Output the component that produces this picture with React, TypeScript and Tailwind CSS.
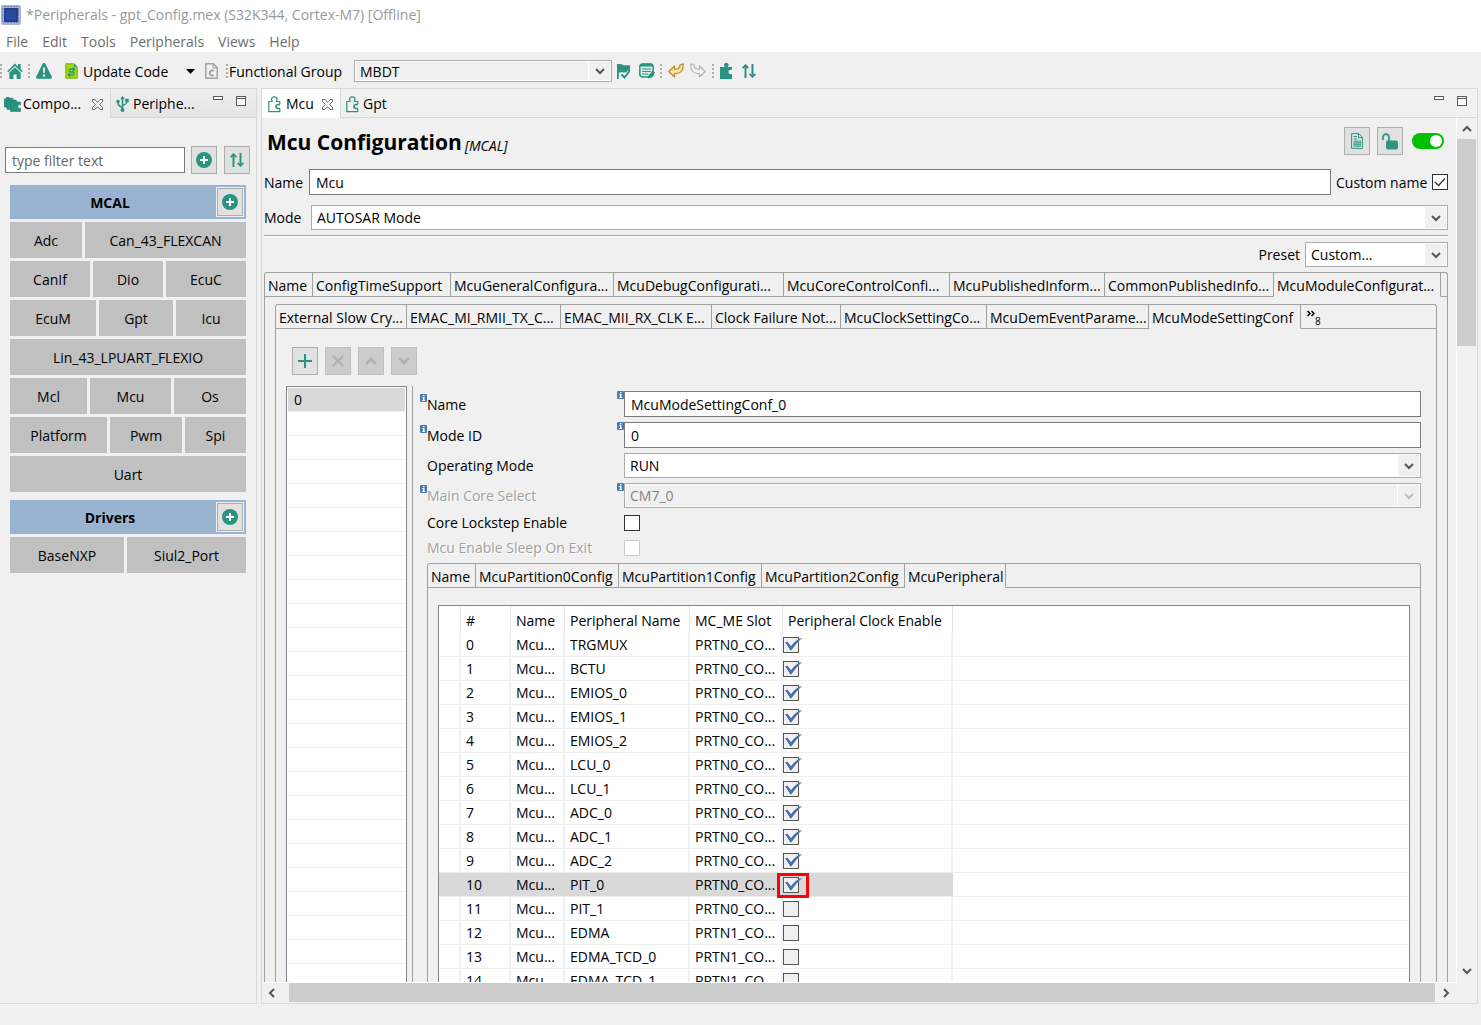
import { useState, type ReactNode } from "react";
import clsx from "clsx";

const TEAL = "#2a9480";

interface Tab {
  label: string;
  width: string;
}

interface Peripheral {
  name: string;
  slot: string;
  enabled: boolean;
}

const mainTabs: Tab[] = [
  { label: "Name", width: "w-12" },
  { label: "ConfigTimeSupport", width: "w-[138px]" },
  { label: "McuGeneralConfigura...", width: "w-[163px]" },
  { label: "McuDebugConfigurati...", width: "w-[170px]" },
  { label: "McuCoreControlConfi...", width: "w-[166px]" },
  { label: "McuPublishedInform...", width: "w-[155px]" },
  { label: "CommonPublishedInfo...", width: "w-[169px]" },
  { label: "McuModuleConfigurat...", width: "w-[167px]" },
];

const moduleTabs: Tab[] = [
  { label: "External Slow Cry...", width: "w-[131px]" },
  { label: "EMAC_MI_RMII_TX_C...", width: "w-[154px]" },
  { label: "EMAC_MII_RX_CLK E...", width: "w-[151px]" },
  { label: "Clock Failure Not...", width: "w-[129px]" },
  { label: "McuClockSettingCo...", width: "w-[146px]" },
  { label: "McuDemEventParame...", width: "w-[162px]" },
  { label: "McuModeSettingConf", width: "w-[152px]" },
];

const modeTabs: Tab[] = [
  { label: "Name", width: "w-12" },
  { label: "McuPartition0Config", width: "w-[143px]" },
  { label: "McuPartition1Config", width: "w-[143px]" },
  { label: "McuPartition2Config", width: "w-[143px]" },
  { label: "McuPeripheral", width: "w-[101px]" },
];

const peripherals: Peripheral[] = [
  { name: "TRGMUX", slot: "PRTN0_CO...", enabled: true },
  { name: "BCTU", slot: "PRTN0_CO...", enabled: true },
  { name: "EMIOS_0", slot: "PRTN0_CO...", enabled: true },
  { name: "EMIOS_1", slot: "PRTN0_CO...", enabled: true },
  { name: "EMIOS_2", slot: "PRTN0_CO...", enabled: true },
  { name: "LCU_0", slot: "PRTN0_CO...", enabled: true },
  { name: "LCU_1", slot: "PRTN0_CO...", enabled: true },
  { name: "ADC_0", slot: "PRTN0_CO...", enabled: true },
  { name: "ADC_1", slot: "PRTN0_CO...", enabled: true },
  { name: "ADC_2", slot: "PRTN0_CO...", enabled: true },
  { name: "PIT_0", slot: "PRTN0_CO...", enabled: true },
  { name: "PIT_1", slot: "PRTN0_CO...", enabled: false },
  { name: "EDMA", slot: "PRTN1_CO...", enabled: false },
  { name: "EDMA_TCD_0", slot: "PRTN1_CO...", enabled: false },
  { name: "EDMA_TCD_1", slot: "PRTN1_CO...", enabled: false },
];

const mcalRows = [
  [
    { label: "Adc", width: "w-[72px]" },
    { label: "Can_43_FLEXCAN", width: "flex-1" },
  ],
  [
    { label: "CanIf", width: "w-20" },
    { label: "Dio", width: "flex-1" },
    { label: "EcuC", width: "w-20" },
  ],
  [
    { label: "EcuM", width: "w-[86px]" },
    { label: "Gpt", width: "flex-1" },
    { label: "Icu", width: "w-[70px]" },
  ],
  [{ label: "Lin_43_LPUART_FLEXIO", width: "flex-1" }],
  [
    { label: "Mcl", width: "w-[77px]" },
    { label: "Mcu", width: "flex-1" },
    { label: "Os", width: "w-[72px]" },
  ],
  [
    { label: "Platform", width: "w-[97px]" },
    { label: "Pwm", width: "flex-1" },
    { label: "Spi", width: "w-[61px]" },
  ],
  [{ label: "Uart", width: "flex-1" }],
];

const driverRows = [
  [
    { label: "BaseNXP", width: "w-[114px]" },
    { label: "Siul2_Port", width: "flex-1" },
  ],
];

function ChipLogo() {
  return (
    <svg width="20" height="20" viewBox="0 0 20 20">
      <rect width="20" height="20" rx="2" fill="#a9b1d6" />
      <path
        d="M4 1v18M7 1v18M10 1v18M13 1v18M16 1v18M1 4h18M1 7h18M1 10h18M1 13h18M1 16h18"
        stroke="#3b4f96"
        strokeWidth="1"
        strokeDasharray="1 1"
      />
      <rect x="3" y="3" width="14" height="14" rx="1" fill="#1f3f8a" />
      <rect x="5" y="5" width="10" height="10" fill="#264b9c" />
    </svg>
  );
}

function HomeIcon() {
  return (
    <svg width="16" height="16" viewBox="0 0 16 16" fill={TEAL}>
      <path d="M8 .5 11 3.4V1h2.6v5l2.2 2.2-1.1 1.1L8 3 1.3 9.3.2 8.2z" />
      <path d="M8 4.300 13.600 9.600V16H9.600v-4.500H6.400V16H2.400V9.600z" />
    </svg>
  );
}

function WarningIcon() {
  return (
    <svg width="16" height="16" viewBox="0 0 16 16">
      <path d="M8 0c.8 0 1.2.5 1.5 1L15.700 13.500c.5 1-.2 2.200-1.200 2.200h-13C.5 15.700-.2 14.500.3 13.500L6.500 1C6.800.5 7.200 0 8 0z" fill={TEAL} />
      <path d="M7 4.500h2l-.3 5.500H7.300z" fill="#f0f0f0" />
      <circle cx="8" cy="12.500" r="1.200" fill="#f0f0f0" />
    </svg>
  );
}

function UpdateIcon() {
  return (
    <svg width="13" height="16" viewBox="0 0 13 16">
      <path d="M.8.800h8.200l3.200 3.200v11.200H.8z" fill="#a5dc00" stroke="#7ba51c" />
      <path d="M9 .5V4h3.500z" fill="#2a9480" />
      <path d="M9.200 7.500V6.200H5.400a1.400 1.400 0 0 0 0 2.800h2.200a1.400 1.400 0 0 1 0 2.900H3.500v-1.400M7.500 4.500l2 1.700-2 1.700M5.300 10.200l-2 1.700 2 1.700" fill="none" stroke={TEAL} strokeWidth="1.300" />
    </svg>
  );
}

function CFileIcon() {
  return (
    <svg width="13" height="16" viewBox="0 0 13 16" fill="none" stroke="#a3a3a3">
      <path d="M.8.800h7.400l4 4v10.400H.8z" strokeWidth="1.500" />
      <path d="M8 1v4h4" />
      <path d="M9 8.200a2.500 2.500 0 1 0 0 3.600" strokeWidth="1.800" />
    </svg>
  );
}

function FlagIcon() {
  return (
    <svg width="14" height="16" viewBox="0 0 14 16">
      <path d="M0 1h3c2 0 2.500 1.200 4.500 1.200H13v7.300H0z" fill={TEAL} />
      <path d="M0 1h1.800v15H0z" fill={TEAL} />
      <path d="m3.500 10.500 4 4 5-6" fill="none" stroke="#f0f0f0" strokeWidth="4" />
      <path d="m4.500 11.500 3 3L12.500 8" fill="none" stroke={TEAL} strokeWidth="2" />
    </svg>
  );
}

function NotesIcon() {
  return (
    <svg width="16" height="16" viewBox="0 0 16 16">
      <rect x=".8" y="1" width="13.400" height="13" rx="3" fill="#d8ece8" stroke={TEAL} strokeWidth="1.500" />
      <path d="M1 3.500C1 1.500 2.500.5 4 .5h7.500c1.500 0 3 1 3 3z" fill={TEAL} />
      <path d="M3.200 6h8.600M3.200 8.500h8.600M3.200 11h6" stroke={TEAL} strokeWidth="1.200" />
      <path d="m9 15.500.5-3 4.500-5 2 2-4.500 5z" fill={TEAL} />
    </svg>
  );
}

function UndoIcon({ flipped = false, fill, stroke }: { flipped?: boolean; fill: string; stroke: string }) {
  return (
    <svg width="16" height="16" viewBox="0 0 16 16">
      <path
        d="M.8 8.500 6.500 3v3.200c3.500.2 5.500-1.200 5.700-4.700l3-.7c.3 5.500-1.200 9.700-8.700 9.900V14z"
        fill={fill}
        stroke={stroke}
        strokeWidth="1.200"
        strokeLinejoin="round"
        transform={flipped ? "matrix(-1 0 0 1 16 0)" : undefined}
      />
    </svg>
  );
}

function PuzzleIcon() {
  return (
    <svg width="13" height="16" viewBox="0 0 13 16">
      <path d="M0 4h4.500c.4-.8-.6-1.300-.6-2.200C3.900.6 5 0 6.300 0s2.400.6 2.400 1.800c0 .9-1 1.400-.6 2.200H12v3c-2-.6-3.500.4-3.500 2s1.500 2.600 3.500 2v5H0z" fill={TEAL} />
    </svg>
  );
}

function PuzzleOutlineIcon() {
  return (
    <svg width="13" height="17" viewBox="0 0 13 17" fill="none" stroke={TEAL}>
      <path d="M11.800 8V5.500H8.500C8.200 4.500 9 4.300 9 3 9 1.700 7.700.8 6.200.8S3.500 1.700 3.500 3C3.500 4.300 4.300 4.500 4 5.500H.8v10.200h11V13" strokeWidth="1.200" />
      <path d="M12 8.700c-2.500-.6-4 .2-4 1.800s1.500 2.400 4 1.800" strokeWidth="1.700" />
    </svg>
  );
}

function PuzzleStackIcon() {
  return (
    <svg width="17" height="16" viewBox="0 0 17 16" fill={TEAL}>
      <path d="M0 2.500h2V1h3.500v1.500h2v9H0z" />
      <path d="M3 4h2.500V2.200H9V4h2.500v9.500H3z" stroke="#1f7263" strokeWidth=".5" />
      <path d="M6.500 6H9V4.500h3.500V6h4v3c-1.800-.5-2.700.3-2.700 1.500s.9 2 2.700 1.500V15.500h-10z" stroke="#1f7263" strokeWidth=".5" />
    </svg>
  );
}

function UsbIcon() {
  return (
    <svg width="13" height="16" viewBox="0 0 13 16" fill="none" stroke={TEAL} strokeWidth="1.600">
      <path d="M6.500 2v12M6.500 11.500C3 10.500 2 9 2 6M6.500 9.500C10 8.500 11 7.500 11 4.500" />
      <path d="m6.500 0 2.300 3.300H4.200z" fill={TEAL} stroke="none" />
      <circle cx="2" cy="5.500" r="1.800" fill={TEAL} stroke="none" />
      <path d="M9.200 2.800h3.600v3.400H9.200z" fill={TEAL} stroke="none" />
      <circle cx="6.500" cy="14" r="2" fill={TEAL} stroke="none" />
    </svg>
  );
}

function SortIcon() {
  return (
    <svg width="14" height="14" viewBox="0 0 14 14" fill="none" stroke={TEAL} strokeWidth="2">
      <path d="M3.500 14V2M10.500 0v12" />
      <path d="M.6 4.200 3.500 1.200l2.900 3M7.600 9.800l2.900 3 2.900-3" strokeWidth="1.800" />
    </svg>
  );
}

function PlusCircleIcon() {
  return (
    <svg width="16" height="16" viewBox="0 0 16 16">
      <circle cx="8" cy="8" r="8" fill={TEAL} />
      <path d="M8 4v8M4 8h8" stroke="#fff" strokeWidth="2" />
    </svg>
  );
}

function DocIcon() {
  return (
    <svg width="12" height="16" viewBox="0 0 12 16" fill="none" stroke={TEAL}>
      <path d="M.6.600h7.200l3.600 3.600v11.200H.6z" />
      <path d="M7.500.600v4h4M2.500 3.500H6M2.500 6H6" />
      <path d="M3 8h6.500v5.500H3z" fill="#8fc4ba" stroke="#5fac9d" />
      <path d="M3 9.800h6.500M3 11.600h6.500" strokeWidth=".7" />
    </svg>
  );
}

function UnlockIcon() {
  return (
    <svg width="16" height="17" viewBox="0 0 16 17">
      <path d="M1 7V4.200a3 3 0 0 1 6 0V9" fill="none" stroke={TEAL} strokeWidth="1.700" />
      <rect x="4" y="7.500" width="12" height="9" rx="2" fill={TEAL} />
    </svg>
  );
}

function Chevron({ dir, color = "#555" }: { dir: "up" | "down" | "left" | "right"; color?: string }) {
  const paths = {
    up: "m1 7 4-4 4 4",
    down: "m1 3 4 4 4-4",
    left: "M7 1 3 5l4 4",
    right: "m3 1 4 4-4 4",
  };
  return (
    <svg width="10" height="10" viewBox="0 0 10 10" fill="none" stroke={color} strokeWidth="2">
      <path d={paths[dir]} />
    </svg>
  );
}

function CloseIcon() {
  return (
    <svg width="11" height="11" viewBox="0 0 11 11" fill="#fff" stroke="#555" strokeWidth=".9">
      <path d="M.5.500h2.300l2.700 2.700L8.200.500h2.300v2.100L7.600 5.500l2.900 2.900v2.100H8.200L5.500 7.800 2.800 10.500H.5V8.400l2.900-2.900L.5 2.600z" />
    </svg>
  );
}

function WindowButtons() {
  return (
    <div className="flex gap-[13px] pt-[7px]">
      <button aria-label="Minimize" className="h-1 w-[10px] border border-[#5a5a5a] bg-white" />
      <button aria-label="Maximize" className="h-[10px] w-[10px] border border-t-[3px] border-[#5a5a5a] border-double bg-white" />
    </div>
  );
}

function Grip() {
  return (
    <svg width="2" height="14" viewBox="0 0 2 14" fill="#b5aa9c">
      <path d="M0 0h2v2H0zM0 4h2v2H0zM0 8h2v2H0zM0 12h2v2H0z" />
    </svg>
  );
}

function InfoBadge() {
  return (
    <svg className="absolute top-0 -left-[7px]" width="7" height="8" viewBox="0 0 7 8">
      <rect width="7" height="8" rx="1" fill="#4a7db0" />
      <path d="M3 1h1.500v1.200H3zM2.300 3h2.200v3H5v1H2.300V6H3V4h-.7z" fill="#fff" />
    </svg>
  );
}

function IconButton({ label, disabled, children }: { label: string; disabled?: boolean; children: ReactNode }) {
  return (
    <button
      aria-label={label}
      disabled={disabled}
      className={clsx(
        "flex h-7 w-[26px] shrink-0 items-center justify-center border",
        disabled ? "border-[#bfbfbf] bg-[#cccccc]" : "border-[#adadad] bg-[#e1e1e1]"
      )}
    >
      {children}
    </button>
  );
}

interface ComboProps {
  id: string;
  value: string;
  className: string;
  grey?: boolean;
  disabled?: boolean;
}

function Combo({ id, value, className, grey, disabled }: ComboProps) {
  return (
    <div className={clsx("relative border border-[#acacac] bg-white p-px", className)}>
      <select
        id={id}
        disabled={disabled}
        className={clsx(
          "block h-full w-full appearance-none pr-6 pl-1 leading-5 outline-none",
          grey || disabled ? "bg-[#f0f0f0]" : "bg-white",
          disabled && "text-[#838383] opacity-100"
        )}
      >
        <option>{value}</option>
      </select>
      <div className="pointer-events-none absolute inset-y-px right-px flex w-[22px] items-center justify-center border-l border-white bg-[#f0f0f0]">
        <Chevron dir="down" color={disabled ? "#bdbdbd" : "#555"} />
      </div>
    </div>
  );
}

function CheckBox({ id, defaultChecked, disabled }: { id: string; defaultChecked?: boolean; disabled?: boolean }) {
  return (
    <span className="relative block h-4 w-4 shrink-0">
      <input
        id={id}
        type="checkbox"
        defaultChecked={defaultChecked}
        disabled={disabled}
        className="peer block h-4 w-4 appearance-none border border-[#333] bg-white disabled:border-[#ccc]"
      />
      <svg className="pointer-events-none absolute inset-0 hidden peer-checked:block" width="16" height="16" viewBox="0 0 16 16">
        <path d="m3 8 3.500 3.500 6.500-7" fill="none" stroke="#333" strokeWidth="1.300" />
      </svg>
    </span>
  );
}

function TabFolder({ tabs, active, extra, children }: { tabs: Tab[]; active: number; extra?: ReactNode; children: ReactNode }) {
  return (
    <div className="rounded-t-[3px] border-x border-t border-[#a0a0a0]">
      <div className="flex" role="tablist">
        {tabs.map((tab, i) => (
          <button
            key={tab.label}
            role="tab"
            aria-selected={i === active}
            className={clsx(
              "h-6 shrink-0 border-r border-b border-r-[#a0a0a0] pt-[2px] pl-[3px] text-left whitespace-nowrap",
              tab.width,
              i === active ? "border-b-transparent" : "border-b-[#a0a0a0]"
            )}
          >
            {tab.label}
          </button>
        ))}
        <div className="h-6 flex-1 border-b border-[#a0a0a0]">{extra}</div>
      </div>
      {children}
    </div>
  );
}

function ComponentGroup({ title, rows }: { title: string; rows: Tab[][] }) {
  return (
    <section className="flex flex-col gap-[3px]">
      <div className="flex h-[34px] items-center bg-[#99b4d1]">
        <h2 className="flex-1 pt-px pr-[6px] text-center font-bold">{title}</h2>
        <div className="mr-[2px] border border-[#f0f0f0]">
          <IconButton label={`Add to ${title}`}>
            <PlusCircleIcon />
          </IconButton>
        </div>
      </div>
      {rows.map((row) => (
        <div key={row[0].label} className="flex gap-[3px]">
          {row.map((item) => (
            <button key={item.label} className={clsx("h-9 bg-[#c0c0c0] pt-px", item.width)}>
              {item.label}
            </button>
          ))}
        </div>
      ))}
    </section>
  );
}

function Toolbar() {
  return (
    <div className="flex h-9 shrink-0 items-center pt-[2px]">
      <Grip />
      <div className="flex items-center gap-[5px] pl-[5px]">
        <button aria-label="Home"><HomeIcon /></button>
        <Grip />
        <button aria-label="Problems" className="pl-px"><WarningIcon /></button>
      </div>
      <button className="flex items-center gap-[5px] pl-[13px]">
        <UpdateIcon />
        <span className="w-[88px] pt-px text-left whitespace-nowrap">Update Code</span>
      </button>
      <button aria-label="Update options" className="pl-[15px]">
        <svg width="9" height="5" viewBox="0 0 9 5"><path d="M0 0h9L4.500 5z" /></svg>
      </button>
      <button aria-label="Source" className="pr-2 pl-[10px]"><CFileIcon /></button>
      <Grip />
      <label htmlFor="group" className="w-[126px] pt-px pl-px whitespace-nowrap">Functional Group</label>
      <Combo id="group" value="MBDT" className="h-[22px] w-[258px]" grey />
      <div className="flex items-center gap-2 pl-[5px]">
        <button aria-label="Validate"><FlagIcon /></button>
        <button aria-label="Notes"><NotesIcon /></button>
      </div>
      <div className="flex items-center gap-[6px] pl-[5px]">
        <Grip />
        <button aria-label="Undo"><UndoIcon fill="#fbe3a0" stroke="#b98a2a" /></button>
        <button aria-label="Redo"><UndoIcon flipped fill="#f2f2f2" stroke="#b5b5b5" /></button>
        <Grip />
        <button aria-label="Components"><PuzzleIcon /></button>
        <button aria-label="Sort" className="pl-[3px]"><SortIcon /></button>
      </div>
    </div>
  );
}

function Sidebar() {
  return (
    <aside className="flex w-[257px] shrink-0 flex-col border-t border-r border-b border-[#d9d9d9]">
      <div className="flex h-[29px]">
        <button className="flex w-[110px] items-center gap-[2px] pt-px pl-1">
          <PuzzleStackIcon />
          <span className="flex-1 text-left">Compo...</span>
          <span className="pr-[7px]"><CloseIcon /></span>
        </button>
        <div className="flex flex-1 justify-between border-b border-l border-[#d9d9d9] bg-linear-to-b from-[#efefef] to-[#e4e4e4] pr-[10px]">
          <button className="flex items-center gap-1 pt-[2px] pl-[5px]">
            <UsbIcon />
            Periphe...
          </button>
          <WindowButtons />
        </div>
      </div>
      <div className="flex items-center pt-7 pr-[6px] pl-[5px]">
        <input
          aria-label="Filter"
          placeholder="type filter text"
          className="h-[26px] min-w-0 flex-1 border border-[#7a7a7a] bg-white px-[6px] placeholder-[#666] outline-none"
        />
        <div className="flex gap-[7px] pl-[6px]">
          <IconButton label="Add"><PlusCircleIcon /></IconButton>
          <IconButton label="Sort components"><SortIcon /></IconButton>
        </div>
      </div>
      <div className="flex flex-col gap-2 pt-[11px] pr-[10px] pl-[10px]">
        <ComponentGroup title="MCAL" rows={mcalRows} />
        <ComponentGroup title="Drivers" rows={driverRows} />
      </div>
    </aside>
  );
}

function FormRow({ id, label, info, disabled, children }: { id: string; label: string; info?: boolean; disabled?: boolean; children: ReactNode }) {
  return (
    <div className="flex items-center">
      <div className="relative w-[197px] shrink-0 pt-px">
        {info && <InfoBadge />}
        <label htmlFor={id} className={clsx(disabled && "text-[#a0a0a0] [text-shadow:1px_1px_0_#fff]")}>
          {label}
        </label>
      </div>
      <div className="relative min-w-0 flex-1">
        {info && <InfoBadge />}
        {children}
      </div>
    </div>
  );
}

function PeripheralTable() {
  const [rows, setRows] = useState(peripherals);
  const selected = 10;

  const toggle = (index: number) =>
    setRows(rows.map((row, i) => (i === index ? { ...row, enabled: !row.enabled } : row)));

  const cell = "border-r-2 border-b border-b-[#eeeeee] pt-px pl-[5px]";

  return (
    <table className="w-full table-fixed border-separate border-spacing-0 border border-b-0 border-[#828790] bg-white text-left whitespace-nowrap">
      <colgroup>
        <col className="w-[22px]" />
        <col className="w-[50px]" />
        <col className="w-[54px]" />
        <col className="w-[125px]" />
        <col className="w-[93px]" />
        <col className="w-[170px]" />
        <col />
      </colgroup>
      <thead>
        <tr className="h-[27px]">
          {["", "#", "Name", "Peripheral Name", "MC_ME Slot", "Peripheral Clock Enable"].map((title) => (
            <th key={title} className="border-r border-[#e5e5e5] pt-[2px] pl-[5px] font-normal">{title}</th>
          ))}
          <th />
        </tr>
      </thead>
      <tbody>
        {rows.map((row, i) => {
          const tone = i === selected ? "border-r-[#d9d9d9] bg-[#d9d9d9]" : "border-r-[#eef1f7]";
          return (
            <tr key={row.name} className="h-6">
              <td className={clsx(cell, tone)} />
              <td className={clsx(cell, tone)}>{i}</td>
              <td className={clsx(cell, tone)}>Mcu...</td>
              <td className={clsx(cell, tone)}>{row.name}</td>
              <td className={clsx(cell, tone)}>{row.slot}</td>
              <td className={clsx("border-r-2 border-b border-b-[#eeeeee]", tone)}>
                <div className="relative h-4 w-4">
                  <input
                    type="checkbox"
                    aria-label={`${row.name} clock enable`}
                    checked={row.enabled}
                    onChange={() => toggle(i)}
                    className="peer block h-4 w-4 appearance-none border border-[#555] bg-[#f0f0f0]"
                  />
                  <svg className="pointer-events-none absolute top-0 left-0 hidden peer-checked:block" width="20" height="16" viewBox="0 0 20 16">
                    <path d="M2 5h2.800L8 9.200C11 5.500 14 1.800 19.500 1 15 4 11.500 9 8.500 13.200H7.300z" fill="#4a70a8" />
                  </svg>
                  {i === selected && (
                    <div className="pointer-events-none absolute -top-1 -left-[6px] h-[25px] w-8 border-3 border-[#fa0505]" />
                  )}
                </div>
              </td>
              <td className="border-b border-[#eeeeee]" />
            </tr>
          );
        })}
      </tbody>
    </table>
  );
}

function ModeSettings() {
  return (
    <div className="flex pl-[10px]">
      <ul className="w-[121px] shrink-0 border border-b-0 border-[#828790] bg-white p-px">
        <li className="h-6 border-b border-[#eeeeee] bg-[#d9d9d9] pt-[2px] pl-[6px]">0</li>
        {Array.from({ length: 24 }, (_, i) => (
          <li key={i} className="h-6 border-b border-[#eeeeee]" />
        ))}
      </ul>
      <div className="ml-[5px] min-w-0 flex-1 border-l border-[#a0a0a0] pr-[15px] pl-[14px]">
        <div className="flex flex-col gap-[5px] pt-[5px]">
          <FormRow id="conf-name" label="Name" info>
            <input id="conf-name" defaultValue="McuModeSettingConf_0" className="block h-[26px] w-full border border-[#7a7a7a] bg-white px-[6px] outline-none" />
          </FormRow>
          <FormRow id="mode-id" label="Mode ID" info>
            <input id="mode-id" defaultValue="0" className="block h-[26px] w-full border border-[#7a7a7a] bg-white px-[6px] outline-none" />
          </FormRow>
          <FormRow id="op-mode" label="Operating Mode">
            <Combo id="op-mode" value="RUN" className="h-[25px]" />
          </FormRow>
          <FormRow id="core" label="Main Core Select" info disabled>
            <Combo id="core" value="CM7_0" className="h-[25px]" disabled />
          </FormRow>
        </div>
        <div className="flex flex-col gap-1 pt-1 pb-[5px]">
          <FormRow id="lockstep" label="Core Lockstep Enable">
            <CheckBox id="lockstep" />
          </FormRow>
          <FormRow id="sleep" label="Mcu Enable Sleep On Exit" disabled>
            <CheckBox id="sleep" disabled />
          </FormRow>
        </div>
        <TabFolder tabs={modeTabs} active={4}>
          <div className="px-[10px] pt-[17px]">
            <PeripheralTable />
          </div>
        </TabFolder>
      </div>
    </div>
  );
}

function ConfigForm() {
  return (
    <div className="pt-[9px] pr-2 pl-[2px]">
      <div className="flex h-7 items-center pr-1 pl-[3px]">
        <h1 className="pt-[2px] text-[21px] leading-7 font-bold">Mcu Configuration</h1>
        <span className="pt-[10px] pl-[3px] italic">[MCAL]</span>
        <div className="ml-auto flex items-center gap-[7px]">
          <IconButton label="Documentation"><DocIcon /></IconButton>
          <IconButton label="Unlock"><UnlockIcon /></IconButton>
          <button role="switch" aria-checked="true" aria-label="Enabled" className="ml-[2px] flex h-4 w-8 items-center justify-end rounded-full bg-[#00c000] pr-[2px]">
            <span className="h-3 w-3 rounded-full bg-white" />
          </button>
        </div>
      </div>
      <div className="flex items-center pt-[14px]">
        <label htmlFor="name" className="w-[45px] pt-px">Name</label>
        <input id="name" defaultValue="Mcu" className="h-[26px] min-w-0 flex-1 border border-[#7a7a7a] bg-white px-[6px] outline-none" />
        <label htmlFor="custom" className="w-[101px] pt-px pl-[5px] whitespace-nowrap">Custom name</label>
        <CheckBox id="custom" defaultChecked />
      </div>
      <div className="flex items-center pt-[10px] pb-[5px]">
        <label htmlFor="mode" className="w-[47px]">Mode</label>
        <Combo id="mode" value="AUTOSAR Mode" className="h-[25px] flex-1" />
      </div>
      <hr className="h-[2px] border-t border-b border-t-[#a0a0a0] border-b-white" />
      <div className="flex items-center justify-end gap-[5px] py-[5px]">
        <label htmlFor="preset">Preset</label>
        <Combo id="preset" value="Custom..." className="h-[25px] w-[143px]" />
      </div>
      <TabFolder tabs={mainTabs} active={7}>
        <div className="px-[10px] pt-[7px]">
          <TabFolder
            tabs={moduleTabs}
            active={6}
            extra={
              <button aria-label="More tabs" className="flex pl-[6px]">
                <svg className="mt-[5px]" width="8" height="8" viewBox="0 0 8 8" fill="none" stroke="#000" strokeWidth="1.500">
                  <path d="m.5 1 2.500 2.500L.5 6M4.500 1 7 3.500 4.500 6" />
                </svg>
                <span className="pt-[10px] text-[10px] leading-3">8</span>
              </button>
            }
          >
            <div className="flex gap-[7px] pt-[18px] pb-[11px] pl-4">
              <IconButton label="Add item">
                <svg width="14" height="14" viewBox="0 0 14 14"><path d="M7 0v14M0 7h14" stroke={TEAL} strokeWidth="2" /></svg>
              </IconButton>
              <IconButton label="Remove item" disabled>
                <svg width="12" height="12" viewBox="0 0 12 12"><path d="m1 1 10 10M11 1 1 11" stroke="#b0b0b0" strokeWidth="2" /></svg>
              </IconButton>
              <IconButton label="Move up" disabled>
                <svg width="12" height="8" viewBox="0 0 12 8"><path d="m1 7 5-5 5 5" fill="none" stroke="#b0b0b0" strokeWidth="2.500" /></svg>
              </IconButton>
              <IconButton label="Move down" disabled>
                <svg width="12" height="8" viewBox="0 0 12 8"><path d="m1 1 5 5 5-5" fill="none" stroke="#b0b0b0" strokeWidth="2.500" /></svg>
              </IconButton>
            </div>
            <ModeSettings />
          </TabFolder>
        </div>
      </TabFolder>
    </div>
  );
}

function Editor() {
  return (
    <main className="flex min-w-0 flex-1 flex-col border border-[#d9d9d9]">
      <div className="flex h-[29px] shrink-0 border-b border-[#d9d9d9] bg-[#f1f1f1]">
        <button className="-mb-px flex w-[79px] items-center gap-[5px] border-r border-[#d9d9d9] bg-white pt-px pl-[6px]">
          <PuzzleOutlineIcon />
          <span className="flex-1 text-left">Mcu</span>
          <span className="pr-[7px]"><CloseIcon /></span>
        </button>
        <button className="flex items-center gap-1 pt-[2px] pl-[5px]">
          <PuzzleOutlineIcon />
          Gpt
        </button>
        <div className="ml-auto pr-[10px]">
          <WindowButtons />
        </div>
      </div>
      <div className="flex min-h-0 flex-1">
        <div className="min-w-0 flex-1 overflow-hidden border-r border-b border-white">
          <ConfigForm />
        </div>
        <div className="flex w-5 shrink-0 flex-col items-center pr-px">
          <div className="flex h-[21px] items-center"><Chevron dir="up" /></div>
          <div className="h-[207px] w-full bg-[#cdcdcd]" />
          <div className="mt-auto flex h-6 items-center"><Chevron dir="down" /></div>
        </div>
      </div>
      <div className="flex h-5 shrink-0 items-center pr-5 pb-px">
        <div className="flex w-[27px] justify-center pr-2"><Chevron dir="left" /></div>
        <div className="h-full flex-1 bg-[#cdcdcd]" />
        <div className="flex w-[22px] justify-center"><Chevron dir="right" /></div>
      </div>
    </main>
  );
}

export default function App() {
  return (
    <div className="flex h-screen flex-col overflow-hidden bg-[#f0f0f0] font-['Open_Sans',sans-serif] text-[14px] leading-5 text-black">
      <header className="shrink-0 bg-white">
        <div className="flex h-[30px] items-center gap-[5px] pl-px text-[#999]">
          <ChipLogo />
          <span>*Peripherals - gpt_Config.mex (S32K344, Cortex-M7) [Offline]</span>
        </div>
        <nav className="flex h-[22px] items-center gap-[14px] pt-[2px] pl-[6px] text-[#6d6d6d]">
          {["File", "Edit", "Tools", "Peripherals", "Views", "Help"].map((item) => (
            <button key={item}>{item}</button>
          ))}
        </nav>
      </header>
      <Toolbar />
      <div className="flex min-h-0 flex-1 gap-1 pr-[3px]">
        <Sidebar />
        <Editor />
      </div>
      <footer className="h-[21px] shrink-0" />
    </div>
  );
}
